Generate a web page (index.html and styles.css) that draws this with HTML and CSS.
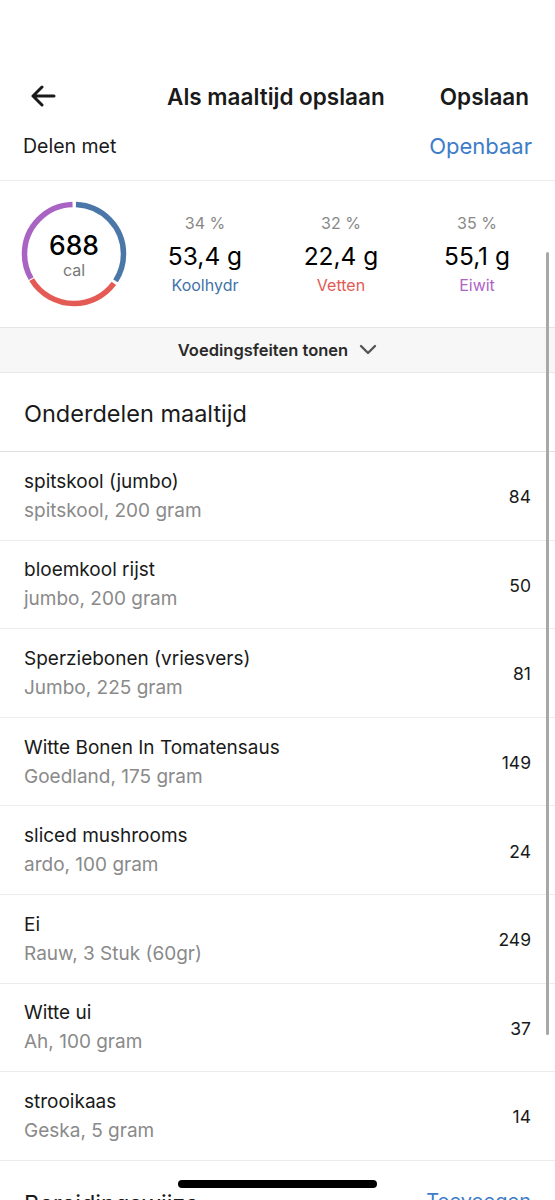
FILE: index.html
```html
<!DOCTYPE html>
<html lang="nl">
<head>
    <meta charset="UTF-8">
    <meta name="viewport" content="width=device-width, initial-scale=1.0">
    <title>Als maaltijd opslaan</title>
    <link rel="stylesheet" href="styles.css">
</head>
<body>
    <div class="screen">
        <!-- kopbalk -->
        <div class="topbar">
            <svg class="back" width="26" height="22" viewBox="0 0 26 22">
                <path d="M24 11H3 M12 2L3 11L12 20" fill="none" stroke="#1a1a1a" stroke-width="3" stroke-linecap="round" stroke-linejoin="round"/>
            </svg>
            <div class="title">Als maaltijd opslaan</div>
            <div class="save">Opslaan</div>
        </div>

        <div class="share">
            <span>Delen met</span>
            <span class="link">Openbaar</span>
        </div>

        <div class="macros">
            <div class="ring">
                <svg width="106" height="106" viewBox="0 0 106 106">
                    <g transform="rotate(-90 53 53)" fill="none" stroke-width="5.5">
                        <circle cx="53" cy="53" r="49.5" stroke="#4a77a8" stroke-dasharray="104 400" stroke-dashoffset="-2"/>
                        <circle cx="53" cy="53" r="49.5" stroke="#e45b55" stroke-dasharray="97 400" stroke-dashoffset="-109"/>
                        <circle cx="53" cy="53" r="49.5" stroke="#a963c3" stroke-dasharray="102 400" stroke-dashoffset="-207"/>
                    </g>
                </svg>
                <div class="ring-text">
                    <div class="cal-num">688</div>
                    <div class="cal-unit">cal</div>
                </div>
            </div>
            <div class="macro first">
                <div class="pct">34 %</div>
                <div class="amount">53,4 g</div>
                <div class="name carbs">Koolhydr</div>
            </div>
            <div class="macro">
                <div class="pct">32 %</div>
                <div class="amount">22,4 g</div>
                <div class="name fat">Vetten</div>
            </div>
            <div class="macro">
                <div class="pct">35 %</div>
                <div class="amount">55,1 g</div>
                <div class="name protein">Eiwit</div>
            </div>
        </div>

        <div class="facts">
            Voedingsfeiten tonen
            <svg width="18" height="12" viewBox="0 0 18 12">
                <path d="M2 2L9 9L16 2" fill="none" stroke="#555" stroke-width="2.4" stroke-linecap="round" stroke-linejoin="round"/>
            </svg>
        </div>

        <div class="section-title">Onderdelen maaltijd</div>

        <div class="items">
            <div class="item">
                <div><div class="item-name">spitskool (jumbo)</div><div class="item-sub">spitskool, 200 gram</div></div>
                <div class="item-cal">84</div>
            </div>
            <div class="item">
                <div><div class="item-name">bloemkool rijst</div><div class="item-sub">jumbo, 200 gram</div></div>
                <div class="item-cal">50</div>
            </div>
            <div class="item">
                <div><div class="item-name">Sperziebonen (vriesvers)</div><div class="item-sub">Jumbo, 225 gram</div></div>
                <div class="item-cal">81</div>
            </div>
            <div class="item">
                <div><div class="item-name">Witte Bonen In Tomatensaus</div><div class="item-sub">Goedland, 175 gram</div></div>
                <div class="item-cal">149</div>
            </div>
            <div class="item">
                <div><div class="item-name">sliced mushrooms</div><div class="item-sub">ardo, 100 gram</div></div>
                <div class="item-cal">24</div>
            </div>
            <div class="item">
                <div><div class="item-name">Ei</div><div class="item-sub">Rauw, 3 Stuk (60gr)</div></div>
                <div class="item-cal">249</div>
            </div>
            <div class="item">
                <div><div class="item-name">Witte ui</div><div class="item-sub">Ah, 100 gram</div></div>
                <div class="item-cal">37</div>
            </div>
            <div class="item">
                <div><div class="item-name">strooikaas</div><div class="item-sub">Geska, 5 gram</div></div>
                <div class="item-cal">14</div>
            </div>
        </div>

        <div class="prep">
            <span>Bereidingswijze</span>
            <span class="link">Toevoegen</span>
        </div>

        <div class="scrollbar"></div>
        <div class="home-bar"></div>
    </div>
</body>
</html>
```

FILE: styles.css
```css
html, body {
    margin: 0;
    padding: 0;
    background: #fff;
}
body {
    font-family: Inter, "Liberation Sans", Arial, sans-serif;
    color: #1a1a1a;
}
.screen {
    position: relative;
    width: 555px;
    height: 1200px;
    overflow: hidden;
    padding-top: 70px;
    box-sizing: border-box;
}
.topbar {
    display: flex;
    align-items: center;
    height: 52px;
    padding: 0 26px 0 30px;
}
.back {
    flex: none;
}
.title {
    flex: 1;
    text-align: center;
    font-size: 22.5px;
    font-weight: 600;
    padding-left: 56px;
}
.save {
    font-size: 22.5px;
    font-weight: 600;
}
.share {
    display: flex;
    justify-content: space-between;
    align-items: center;
    height: 48px;
    padding: 0 23px 10px 23px;
    font-size: 19.5px;
    border-bottom: 1px solid #ececec;
}
.share .link {
    font-size: 22px;
}
.link {
    color: #3d7cc9;
}
.macros {
    display: flex;
    align-items: center;
    height: 146px;
    padding: 0 10px 0 21px;
    border-bottom: 1px solid #e4e4e4;
}
.ring {
    position: relative;
    width: 106px;
    height: 106px;
    flex: none;
}
.ring svg {
    display: block;
}
.ring-text {
    position: absolute;
    inset: 0;
    display: flex;
    flex-direction: column;
    align-items: center;
    justify-content: center;
}
.cal-num {
    font-size: 26.5px;
    line-height: 29px;
    font-weight: 500;
    color: #000;
    margin-top: 2px;
}
.cal-unit {
    font-size: 16px;
    line-height: 20px;
    color: #777;
}
.macro {
    flex: 1;
    text-align: center;
    margin-top: -1px;
}
.macro.first {
    margin-left: 10px;
}
.pct {
    font-size: 16px;
    color: #888;
    line-height: 20px;
}
.amount {
    font-size: 24.5px;
    line-height: 34px;
    color: #000;
    margin: 6px 0 2px;
}
.name {
    font-size: 16px;
    line-height: 20px;
}
.carbs { color: #4273aa; }
.fat { color: #e25953; }
.protein { color: #b063c5; }
.facts {
    display: flex;
    justify-content: center;
    align-items: center;
    gap: 11px;
    height: 44px;
    background: #f7f7f7;
    border-bottom: 1px solid #e8e8e8;
    font-size: 16.5px;
    font-weight: 600;
    color: #2a2a2a;
}
.section-title {
    height: 78px;
    line-height: 82px;
    padding-left: 24px;
    font-size: 23.5px;
    border-bottom: 1px solid #e0e0e0;
}
.item {
    display: flex;
    justify-content: space-between;
    align-items: center;
    height: 87.6px;
    padding: 0 24px;
    border-bottom: 1px solid #ececec;
}
.item-name {
    font-size: 19px;
    line-height: 29px;
}
.item-sub {
    font-size: 19px;
    line-height: 29px;
    color: #8a8a8a;
}
.item-cal {
    font-size: 17.5px;
    padding-top: 2px;
}
.prep {
    display: flex;
    justify-content: space-between;
    padding: 28px 24px 0;
    font-size: 23.5px;
}
.prep .link {
    font-size: 20px;
}
.scrollbar {
    position: absolute;
    left: 546px;
    top: 252px;
    width: 3px;
    height: 783px;
    border-radius: 2px;
    background: #a8a8a8;
}
.home-bar {
    position: absolute;
    left: 178px;
    top: 1180px;
    width: 199px;
    height: 8px;
    border-radius: 4px;
    background: #000;
}
```
